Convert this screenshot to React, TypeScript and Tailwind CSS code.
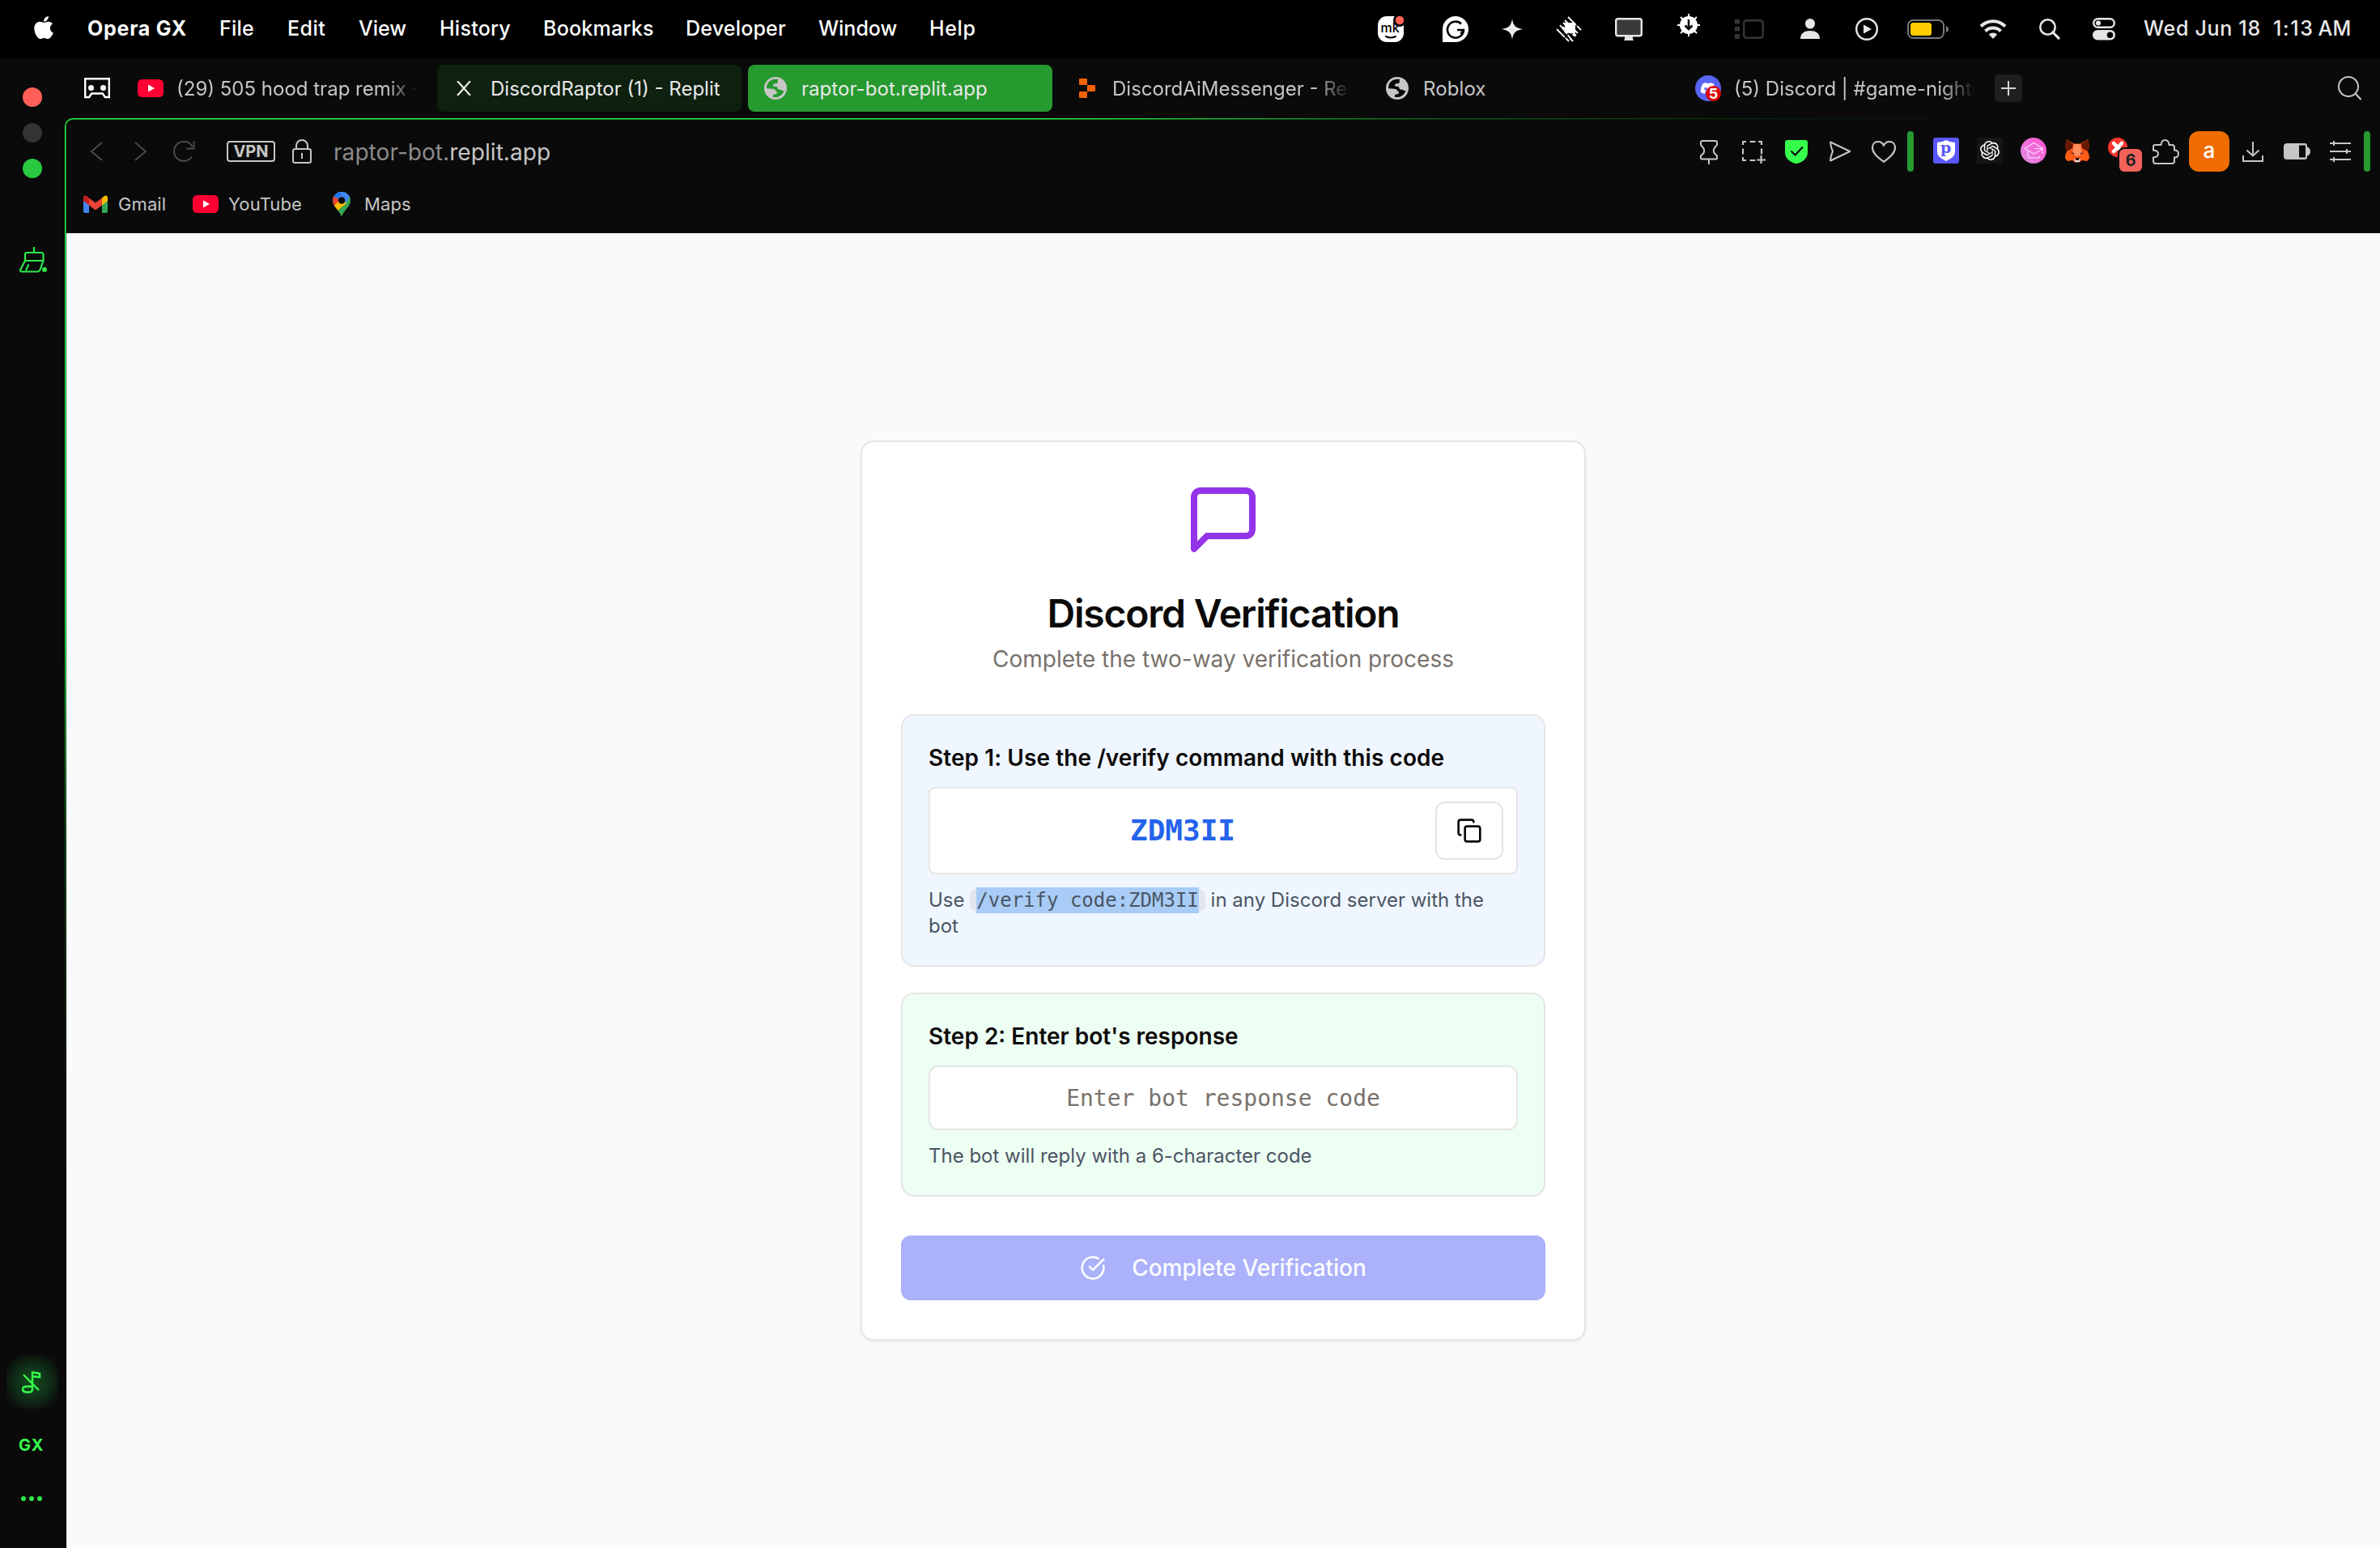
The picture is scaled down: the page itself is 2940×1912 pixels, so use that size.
import type { ReactNode } from "react";
import { FaApple, FaDiscord } from "react-icons/fa";
import { SiOpenai } from "react-icons/si";
import { CircleCheckBig, Copy } from "lucide-react";

type IconProps = { box: string; w: number; h: number; className?: string; children: ReactNode };
function Icon({ box, w, h, className = "", children }: IconProps) {
  return (
    <svg viewBox={box} width={w} height={h} fill="none" className={"shrink-0 " + className}>
      {children}
    </svg>
  );
}

function YouTube({ className = "" }: { className?: string }) {
  return (
    <Icon box="0 0 32 22" w={32} h={22} className={className}>
      <rect width="32" height="22" rx="5.5" fill="#ff0033" />
      <path d="M13 6.5 21 11l-8 4.500z" fill="#fff" />
    </Icon>
  );
}

function Globe({ className = "" }: { className?: string }) {
  return (
    <Icon box="0 0 28 28" w={28} h={28} className={className}>
      <circle cx="14" cy="14" r="14" fill="#c6c6c6" />
      <path
        className="fill-[var(--tab)]"
        d="M17.500 3.200C11 1.500 4.500 5 3.200 11.500 3 12.700 3 13 3 14c3 1 7.500.5 9.500 1.200 2 .8 1.500 2.800 3.500 3.300.5 2.500-1.500 3-4.500 3.200-.8 1-.8 2-.5 3 6 1.500 12-2 13.500-8-1 .5-2.500.5-3.500-1-1.500.2-4 .5-4.500-2-.3-2.200-2-1.700-4-1.900-2-.3-2.200-2.300-.2-3.300 1.500-.7 4 .2 4.500-2 .2-1.500-.8-2 .7-3.300z"
      />
    </Icon>
  );
}

function MenuBar() {
  return (
    <header className="flex h-[72px] items-center bg-black text-[25px] leading-[30px] font-medium whitespace-nowrap text-white">
      <FaApple className="mt-[-4px] ml-[38px] size-8 shrink-0" />
      <nav className="mb-[2px] ml-[38px] flex">
        <div className="w-[163px] font-bold tracking-[0.75px]">Opera GX</div>
        <div className="w-[84px] tracking-[0.2px]">File</div>
        <div className="w-[88px] tracking-[0.5px]">Edit</div>
        <div className="w-[100px]">View</div>
        <div className="w-[128px] tracking-[0.25px]">History</div>
        <div className="w-[176px] tracking-[0.25px]">Bookmarks</div>
        <div className="w-[164px] tracking-[0.2px]">Developer</div>
        <div className="w-[137px]">Window</div>
        <div className="w-[60px] tracking-[0.6px]">Help</div>
      </nav>

      <Icon box="0 0 32 32" w={32} h={32} className="ml-[494px]">
        <rect width="32" height="32" rx="11" fill="#fff" />
        <circle cx="27" cy="5" r="8" fill="#000" />
        <circle cx="27" cy="5" r="5.200" fill="#ff5f57" />
        <text x="3.500" y="20" fontSize="16" fontWeight="500" fill="#000">mk</text>
        <path d="M10 25q6 3 12 0" stroke="#000" strokeWidth="2" strokeLinecap="round" />
      </Icon>
      <Icon box="0 0 32 32" w={32} h={32} className="ml-12">
        <path d="M16 0a16 16 0 1 1 0 32H0V16A16 16 0 0 1 16 0z" fill="#fff" />
        <path d="M23 9.500A10 10 0 1 0 26 17h-8M26 17l-3.500 5" stroke="#000" strokeWidth="2.600" />
      </Icon>
      <Icon box="0 0 26 26" w={26} h={26} className="mt-[-1px] ml-[41px]">
        <path d="M13 0c1.200 8.500 4 11.500 13 13-9 1.500-11.800 4.500-13 13-1.200-8.500-4-11.500-13-13 9-1.500 11.800-4.500 13-13z" fill="#ececec" />
      </Icon>
      <Icon box="0 0 32 32" w={32} h={32} className="ml-[41px]">
        <path d="M15 1 31 17M11 5l16 16M17 27l4 4M5 11 21 31M1 16l15 15M9 8l16 16M8 13l16 12" stroke="#fff" strokeWidth="1.800" strokeDasharray="14 1.500" />
        <rect x="11" y="8" width="13" height="13" fill="#fff" />
      </Icon>
      <Icon box="0 0 34 28" w={34} h={28} className="ml-[41px]">
        <rect x="1.200" y="1.200" width="31.600" height="21" rx="2.500" fill="#3a3a3a" stroke="#e6e6e6" strokeWidth="2.400" />
        <path d="M12 23h10v3l1 2H11l1-2z" fill="#e6e6e6" />
      </Icon>
      <Icon box="0 0 28 28" w={28} h={28} className="mt-[-11px] ml-[43px]">
        <path d="M14 0v28M0 14h28M4 4l20 20M24 4 4 24" stroke="#fff" strokeWidth="2" />
        <circle cx="14" cy="14" r="11" fill="#fff" />
        <path d="M14 7v12M9.500 14.500 14 19l4.500-4.500" stroke="#000" strokeWidth="2.600" />
      </Icon>
      <Icon box="0 0 36 24" w={36} h={24} className="ml-[43px]">
        <path d="M0 0h6v5.500H0zM0 9h6v5.500H0zM0 18h6v6H0z" fill="#363636" />
        <rect x="11.200" y="1.200" width="23.500" height="21.600" rx="3" stroke="#363636" strokeWidth="2.400" />
      </Icon>
      <Icon box="0 0 24 26" w={24} h={26} className="ml-[45px]">
        <ellipse cx="12" cy="6.300" rx="6" ry="6.300" fill="#e6e6e6" />
        <path d="M0 25c0-7 5-10 12-10s12 3 12 10z" fill="#e6e6e6" />
      </Icon>
      <Icon box="0 0 28 28" w={28} h={28} className="ml-[44px]">
        <circle cx="14" cy="14" r="12.800" stroke="#e6e6e6" strokeWidth="2.400" />
        <path d="M10 8.500 20 14l-10 5.500z" fill="#e6e6e6" />
      </Icon>
      <Icon box="0 0 51 24" w={51} h={24} className="ml-9">
        <rect x="1" y="1" width="44" height="22" rx="6.500" stroke="#787878" strokeWidth="2" />
        <rect x="4" y="4" width="26" height="16" rx="3.500" fill="#fc0" />
        <path d="M48 8q3 1 3 4t-3 4z" fill="#787878" />
      </Icon>
      <Icon box="0 0 34 26" w={34} h={26} className="ml-[38px]">
        <path d="M2 9.500a21 21 0 0 1 30 0M7.500 15.500a13.500 13.500 0 0 1 19 0" stroke="#e6e6e6" strokeWidth="4" />
        <path d="M11.800 19.500a7.500 7.500 0 0 1 10.400 0L17 25z" fill="#e6e6e6" />
      </Icon>
      <Icon box="0 0 26 26" w={26} h={26} className="ml-[40px]">
        <circle cx="10.500" cy="10.500" r="9.200" stroke="#e6e6e6" strokeWidth="2.600" />
        <path d="m17 17 7 7.200" stroke="#e6e6e6" strokeWidth="3.200" strokeLinecap="round" />
      </Icon>
      <Icon box="0 0 28 28" w={28} h={28} className="ml-10">
        <rect x="1.200" y="1.200" width="25.600" height="10.600" rx="5.300" stroke="#e6e6e6" strokeWidth="2.400" />
        <circle cx="7" cy="6.500" r="3" fill="#e6e6e6" />
        <rect y="15" width="28" height="12.500" rx="6.200" fill="#e6e6e6" />
        <circle cx="21.500" cy="21.200" r="3.800" fill="#000" />
      </Icon>
      <div className="mb-[2px] ml-[35px] w-[146px] tracking-[0.7px] text-[#e9e9e9]">Wed Jun 18</div>
      <div className="mb-[2px] ml-[14px] text-[#e9e9e9]">
        <span className="tracking-[1.6px]">1:13</span>
        <span className="ml-[5px] tracking-[0.3px]">AM</span>
      </div>
    </header>
  );
}

function TabStrip() {
  return (
    <div className="flex h-[74px] items-center text-2xl leading-[30px] whitespace-nowrap text-[#c6c6c6]">
      <Icon box="0 0 32 26" w={32} h={26} className="ml-6">
        <path d="M1.200 24V1.200h29.600V24h-5l-3-4.500H9.200l-3 4.500z" stroke="#fff" strokeWidth="2.400" />
        <circle cx="8.500" cy="12.500" r="3.500" fill="#fff" />
        <circle cx="23.500" cy="12.500" r="3.500" fill="#fff" />
      </Icon>
      <YouTube className="ml-[34px]" />
      <div className="mt-px ml-4 w-[300px] overflow-hidden [mask-image:linear-gradient(to_right,#000_260px,transparent_298px)]">
        (29) 505 hood trap remix ·
      </div>
      <div className="ml-[22px] flex h-[58px] w-[376px] shrink-0 items-center rounded-lg bg-[#0e200e] text-[#e9e9e9]">
        <Icon box="0 0 18 18" w={18} h={18} className="ml-6">
          <path d="m1 0 16 18M17 0 1 18" stroke="#e9e9e9" strokeWidth="2.200" />
        </Icon>
        <div className="mt-px ml-6">DiscordRaptor (1) - Replit</div>
      </div>
      <div className="ml-2 flex h-[58px] w-[376px] shrink-0 items-center rounded-lg bg-[#26992f] text-[#e9e9e9] [--tab:#26992f]">
        <Globe className="ml-5" />
        <div className="mt-px ml-[18px] tracking-[0.05px]">raptor-bot.replit.app</div>
      </div>
      <Icon box="0 0 20 24" w={20} h={24} className="ml-[33px]">
        <path d="M1 0h8q1 0 1 1v7H1q-1 0-1-1V1q0-1 1-1zM10 8h9q1 0 1 1v6q0 1-1 1h-9zM0 17q0-1 1-1h9v7q0 1-1 1H1q-1 0-1-1z" fill="#f26207" />
      </Icon>
      <div className="mt-px ml-[21px] w-[294px] overflow-hidden [mask-image:linear-gradient(to_right,#000_250px,transparent_294px)]">
        DiscordAiMessenger - Rep
      </div>
      <Globe className="ml-11 [--tab:#0a0a0a]" />
      <div className="mt-px ml-[18px] w-[336px] tracking-[0.1px]">Roblox</div>
      <div className="relative flex size-8 shrink-0 items-center justify-center rounded-full bg-[#5865f2] text-white">
        <FaDiscord className="size-5" />
        <span className="absolute top-[13px] left-[13px] flex size-[19px] items-center justify-center rounded-full bg-[#dd0404] text-lg font-bold">5</span>
      </div>
      <div className="mt-px ml-4 w-[300px] overflow-hidden [mask-image:linear-gradient(to_right,#000_255px,transparent_298px)]">
        (5) Discord | #game-nights
      </div>
      <div className="ml-[22px] flex size-[34px] shrink-0 items-center justify-center rounded-md bg-[#1f1f1e]">
        <Icon box="0 0 18 18" w={18} h={18}>
          <path d="M9 0v18M0 9h18" stroke="#d6d6d6" strokeWidth="2" />
        </Icon>
      </div>
      <Icon box="0 0 30 30" w={30} h={30} className="mr-[22px] ml-auto">
        <circle cx="13" cy="13" r="12" stroke="#c6c6c6" strokeWidth="2" />
        <path d="m22 22 6.500 7" stroke="#c6c6c6" strokeWidth="2.200" />
      </Icon>
    </div>
  );
}

function Toolbar() {
  return (
    <div className="flex h-[78px] items-center">
      <Icon box="0 0 16 24" w={16} h={24} className="ml-[29px]">
        <path d="M15 1 2 12l13 11" stroke="#4a4a4a" strokeWidth="2" />
      </Icon>
      <Icon box="0 0 16 24" w={16} h={24} className="ml-[39px]">
        <path d="m1 1 13 11L1 23" stroke="#4a4a4a" strokeWidth="2" />
      </Icon>
      <Icon box="0 0 28 28" w={28} h={28} className="ml-[31px]">
        <path d="M24 20.500A12 12 0 1 1 24.500 8M26.500 1v9.500H17" stroke="#4a4a4a" strokeWidth="2" />
      </Icon>
      <div className="ml-[39px] flex h-[26px] w-[60px] shrink-0 items-center justify-center rounded-[4px] border-2 border-[#c6c6c6] text-xl leading-6 font-bold text-[#c6c6c6]">
        VPN
      </div>
      <Icon box="0 0 24 30" w={24} h={30} className="ml-[21px]">
        <rect x="1" y="12" width="22" height="17" rx="2.500" stroke="#c6c6c6" strokeWidth="2" />
        <path d="M5 12V8a7 7 0 0 1 14 0v4M12 17v7" stroke="#c6c6c6" strokeWidth="2" />
      </Icon>
      <div className="mt-[2px] ml-[27px] text-[28px] leading-9 tracking-[0.06px] text-[#c6c6c6]">
        <span className="text-[#8c8c8c]">raptor-bot.</span>replit.app
      </div>

      <Icon box="0 0 22 30" w={22} h={30} className="mt-[2px] ml-auto">
        <path d="M3 1h16q2 0 2 1.500V6l-3 3.500q-2.500 4 0 7l3 3V22q0 1.500-1.500 1.500h-17Q1 23.500 1 22v-2.500l3-3q2.500-3 0-7L1 6V2.500Q1 1 3 1zM11 23.500V30" stroke="#c6c6c6" strokeWidth="2" />
      </Icon>
      <Icon box="0 0 29 30" w={29} h={30} className="mt-[3px] ml-[30px]">
        <path d="M1 5V1h4M9.500 1h7M20 1h4v4M24 9.500v7M1 9.500v7M1 20v4h4M9.500 24h7M23.500 18v10M18.500 23.500H29" stroke="#c6c6c6" strokeWidth="2.200" />
      </Icon>
      <Icon box="0 0 28 29" w={28} h={29} className="mt-[1px] ml-6">
        <path d="M3 0h22q3 0 3 3v12c0 8-6 12-14 14.500C6 27 0 23 0 15V3q0-3 3-3z" fill="#36ff4c" />
        <path d="m7.500 13.500 5 5 9.500-10" stroke="#0a0a0a" strokeWidth="2.200" />
      </Icon>
      <Icon box="0 0 27 26" w={27} h={26} className="ml-[27px]">
        <path d="m1.200 1.500 24 11.500-24 11.500Q1 20 4 13 1 6 1.200 1.500z" stroke="#c6c6c6" strokeWidth="2" strokeLinejoin="round" />
      </Icon>
      <Icon box="0 0 30 27" w={30} h={27} className="ml-[25px]">
        <path d="M15 26C8 20.500 1 15.500 1 8.500 1 4 4 1 8 1q4.500 0 7 4.500Q17.500 1 22 1c4 0 7 3 7 7.500C29 15.500 22 20.500 15 26z" stroke="#c6c6c6" strokeWidth="2.200" />
      </Icon>
      <div className="ml-[14px] h-[50px] w-2 shrink-0 rounded-full bg-[#26992f]" />
      <Icon box="0 0 32 32" w={32} h={32} className="mt-[-2px] ml-6">
        <rect width="32" height="32" rx="3" fill="#5b57fb" />
        <path d="M16 3q5 3 11 3v12q0 6-11 11Q5 24 5 18V6q6 0 11-3z" fill="#fff" />
        <text x="9" y="19" fontSize="19" fontWeight="700" fill="#5b57fb" fontFamily="DejaVu Serif">p</text>
      </Icon>
      <div className="mt-[-2px] ml-[22px] flex size-8 shrink-0 items-center justify-center bg-[#151515]">
        <SiOpenai className="size-6 text-white" />
      </div>
      <Icon box="0 0 32 32" w={32} h={32} className="mt-[-2px] ml-[22px]">
        <defs>
          <linearGradient id="pink" x1="1" y1="0" x2="0" y2="1">
            <stop offset="0" stopColor="#ff4fd0" />
            <stop offset="1" stopColor="#e08fe6" />
          </linearGradient>
        </defs>
        <circle cx="16" cy="16" r="16" fill="url(#pink)" />
        <path d="m5 13.500 11.500-7 11 7-11 6.500zM9 16v6.500q0 2.500 3 2.500h9.500q2 0 2-2M27 14v6M17 13.500h10" stroke="#ffd9fb" strokeWidth="1.200" strokeLinejoin="round" />
      </Icon>
      <Icon box="0 0 30 29" w={30} h={29} className="mt-[-2px] ml-[23px]">
        <path d="M2 0 11 5.500h8L28 0l2 8-2 7 2 8-3 4-6-1-3 2.500h-6L9 26l-6 1-3-4 2-8-2-7z" fill="#f5551a" />
        <path d="M2 0 10 6 9 11 2 15 0 8zM28 0l-8 6 1 5 7 4 2-8z" fill="#661800" />
        <path d="M11 6h8l2 12-6 4-6-4z" fill="#ff8d5d" />
        <path d="m1 17 8 1 3 6-9 3-3-4zM29 17l-8 1-3 6 9 3 3-4z" fill="#ff5c16" />
        <path d="M11 24h8l-1.500 4h-5z" fill="#e8e8f0" />
        <path d="M7 16l4 1v2zM23 16l-4 1v2zM12.500 23h5l-.5 3h-4z" fill="#3a1208" />
      </Icon>
      <div className="relative ml-[23px] h-[50px] w-[42px] shrink-0">
        <Icon box="0 0 24 24" w={24} h={24} className="mt-2">
          <circle cx="12" cy="12" r="12" fill="#f8382e" />
          <path d="m7 7 10 10M17 7 7 17" stroke="#fff" strokeWidth="4.500" strokeLinecap="round" />
        </Icon>
        <span className="absolute top-[20px] left-[12px] flex size-8 items-center justify-center rounded-lg border-2 border-[#0a0a0a] bg-[#f3625b] text-xl font-bold text-[#222]">6</span>
      </div>
      <Icon box="0 0 33 31" w={33} h={31} className="ml-[13px]">
        <path d="M3 7h7.500q.5-6 5-6t5 6H24q3 0 3 3v3.500q5 0 5 4.500t-5 4.500V27q0 3-3 3H4q-3 0-3-3v-4.500q6-.5 6-4.500t-6-4.500V9q0-2 2-2z" stroke="#c6c6c6" strokeWidth="2" />
      </Icon>
      <div className="ml-3 flex size-[50px] shrink-0 items-center justify-center rounded-xl bg-[#f06c00] pb-1 text-[26px] font-medium text-white">a</div>
      <Icon box="0 0 26 25" w={26} h={25} className="ml-4">
        <path d="M13 0v17M5.500 10.500 13 17.500l7.500-7M1 17v7h24v-7" stroke="#c6c6c6" strokeWidth="2" />
      </Icon>
      <Icon box="0 0 33 20" w={33} h={20} className="ml-[25px]">
        <path d="M4 0h22q3 0 3 3v1.500q4 1 4 5.500t-4 5.500V17q0 3-3 3H4q-4 0-4-4V4q0-4 4-4z" fill="#c6c6c6" />
        <path d="M19 2.500h8v15h-8z" fill="#0a0a0a" />
      </Icon>
      <Icon box="0 0 26 26" w={26} h={26} className="ml-6">
        <path d="M0 3h26M0 13h26M0 23h26M5 0v6M21 10v6M5 20v6" stroke="#c6c6c6" strokeWidth="2" />
      </Icon>
      <div className="mr-3 ml-4 h-[50px] w-2 shrink-0 rounded-full bg-[#26992f]" />
    </div>
  );
}

function Bookmarks() {
  return (
    <div className="flex h-[52px] items-center text-[22px] leading-7 tracking-[0.1px] text-[#c6c6c6]">
      <Icon box="0 0 30 22" w={30} h={22} className="ml-[21px]">
        <path d="M0 4v16q0 2 2 2h5V9z" fill="#4285f4" />
        <path d="M30 4v16q0 2-2 2h-5V9z" fill="#34a853" />
        <path d="M23 3.500 26 1q4-2 4 3v3l-7 5.500z" fill="#fbbc04" />
        <path d="M7 3.500 15 9.500l8-6v9L15 18.500 7 12.500z" fill="#ea4335" />
        <path d="M7 3.500 4 1Q0-1 0 4v3l7 5.500z" fill="#c5221f" />
      </Icon>
      <div className="ml-[13px] w-[92px]">Gmail</div>
      <YouTube />
      <div className="ml-3 w-[129px]">YouTube</div>
      <Icon box="0 0 22 31" w={22} h={31}>
        <clipPath id="pin">
          <path d="M11 0a11 11 0 0 1 11 11c0 7-8 11-11 20C8 22 0 18 0 11A11 11 0 0 1 11 0z" />
        </clipPath>
        <g clipPath="url(#pin)">
          <path d="M0 0h22v31H0z" fill="#34a853" />
          <path d="M0 8 11 11 22 6V0H0z" fill="#4285f4" />
          <path d="M0 0h8l3 3-7 6z" fill="#1a73e8" />
          <path d="M0 5 11 11 2 20H0z" fill="#ea4335" />
          <path d="m1 18 12-13 4 9L5 24z" fill="#fbbc04" />
          <path d="M11 3 16 1l6 5-7 8z" fill="#4285f4" />
        </g>
        <circle cx="11" cy="10.500" r="4.200" fill="#0a0a0a" />
      </Icon>
      <div className="ml-[17px]">Maps</div>
    </div>
  );
}

function Sidebar() {
  return (
    <aside className="flex w-20 shrink-0 flex-col items-start pb-[1px]">
      <div className="mt-9 ml-7 flex flex-col gap-5">
        <div className="size-6 rounded-full bg-[#ff5f57]" />
        <div className="size-6 rounded-full bg-[#333]" />
        <div className="size-6 rounded-full bg-[#28c840]" />
      </div>
      <Icon box="0 0 34 32" w={34} h={32} className="mt-[85px] ml-6">
        <path d="M18 0v7M9 7h18q2.500 0 2.500 2.500V17H7V9.500Q7 7 9 7zM7 17 1.200 28q-.5 2.500 1.500 2.500h20Q25 30 26 27l3.500-10M11.500 21.500 8 29" stroke="#2ee84a" strokeWidth="2.200" />
        <circle cx="31" cy="28" r="3" fill="#2ee84a" />
      </Icon>
      <div className="mt-auto ml-2 flex h-[66px] w-16 items-center justify-center rounded-2xl bg-[radial-gradient(circle,#144d1c_0%,#11331a_40%,#0a0a0a_85%)]">
        <Icon box="0 0 24 28" w={24} h={28} className="mr-[3px]">
          <path d="M13 23V2l9 1.500V8l-9-1M13 19.500H5q-4 .5-4 3.500t4 3.500h4q4 0 4-3.500M2 5l19 19" stroke="#36ff4c" strokeWidth="2.400" />
        </Icon>
      </div>
      <div className="mt-8 ml-[23px] text-xl leading-[26px] font-bold tracking-[1px] text-[#36ff4c]">GX</div>
      <div className="mt-[50px] mb-[57px] ml-[26px] flex gap-1">
        <div className="size-1.5 rounded-full bg-[#2ee84a]" />
        <div className="size-1.5 rounded-full bg-[#2ee84a]" />
        <div className="size-1.5 rounded-full bg-[#2ee84a]" />
      </div>
    </aside>
  );
}

function VerificationCard() {
  return (
    <section className="flex w-[896px] flex-col rounded-2xl border-2 border-[#e7e5e4] bg-white p-12 text-[#0c0a09] shadow-[0_2px_4px_rgba(0,0,0,0.05)]">
      <Icon box="0 0 24 24" w={96} h={96} className="mx-auto">
        <path
          d="M21 15a2 2 0 0 1-2 2H7l-4 4V5a2 2 0 0 1 2-2h14a2 2 0 0 1 2 2z"
          stroke="#9333ea"
          strokeWidth="2"
          strokeLinecap="round"
          strokeLinejoin="round"
        />
      </Icon>
      <h1 className="mt-11 text-center text-5xl leading-none font-semibold tracking-[-1.2px]">Discord Verification</h1>
      <p className="mt-3 text-center text-[28px] leading-10 text-[#78716c]">Complete the two-way verification process</p>

      <div className="mt-12 rounded-2xl border-2 border-[#e5e5e5] bg-[#eff6ff] p-8">
        <h2 className="text-[28px] leading-10 font-semibold tracking-[0.07px]">Step 1: Use the /verify command with this code</h2>
        <div className="mt-4 flex items-center gap-4 rounded-lg border-2 border-[#e7e5e4] bg-white p-4">
          <code className="flex-1 text-center font-['DejaVu_Sans_Mono',monospace] text-4xl leading-[56px] font-bold text-[#2563eb]">ZDM3II</code>
          <button className="flex h-[72px] w-[84px] items-center justify-center rounded-xl border-2 border-[#e7e5e4] bg-white">
            <Copy className="size-8" strokeWidth={2} />
          </button>
        </div>
        <p className="mt-4 text-2xl leading-8 text-[#4b5563]">
          Use{" "}
          <code className="rounded-lg bg-[#e2e6ee] px-2 font-['DejaVu_Sans_Mono',monospace]">
            <span className="bg-[#a8ccf6] py-[2px]">/verify code:ZDM3II</span>
          </code>{" "}
          in any Discord server with the bot
        </p>
      </div>

      <div className="mt-8 rounded-2xl border-2 border-[#e5e5e5] bg-[#edfef3] p-8">
        <h2 className="text-[28px] leading-10 font-semibold">Step 2: Enter bot's response</h2>
        <div className="mt-4 flex h-20 items-center justify-center rounded-xl border-2 border-[#e7e5e4] bg-white pt-[2px] font-['DejaVu_Sans_Mono',monospace] text-[28px] text-[#78716c]">
          Enter bot response code
        </div>
        <p className="mt-4 text-2xl leading-8 text-[#4b5563]">The bot will reply with a 6-character code</p>
      </div>

      <button className="mt-12 flex h-20 items-center justify-center gap-8 rounded-xl bg-[#abb1fa] text-[28px] font-medium text-[#fcfdff]">
        <CircleCheckBig className="size-8" strokeWidth={2} />
        Complete Verification
      </button>
    </section>
  );
}

export default function App() {
  return (
    <div className="flex h-[1912px] w-[2940px] flex-col overflow-hidden bg-[#0a0a0a] font-['Inter',sans-serif]">
      <MenuBar />
      <div className="flex min-h-0 flex-1">
        <Sidebar />
        <div className="flex min-w-0 flex-1 flex-col">
          <TabStrip />
          <div className="flex-1 rounded-tl-[10px] bg-[radial-gradient(ellipse_2500px_1300px_at_0_0,#2cff48_0%,#2cff48_48%,#14591f_68%,#0c200e_85%,#0a0a0a_100%)] pt-px pl-px">
            <div className="flex h-full flex-col rounded-tl-[9px] bg-black/50 pt-px pl-px">
              <div className="flex h-full flex-col rounded-tl-lg bg-[#0a0a0a]">
                <Toolbar />
                <Bookmarks />
                <main className="mt-[10px] flex flex-1 items-center justify-center bg-[#f9fafb]">
                  <VerificationCard />
                </main>
              </div>
            </div>
          </div>
        </div>
      </div>
    </div>
  );
}
